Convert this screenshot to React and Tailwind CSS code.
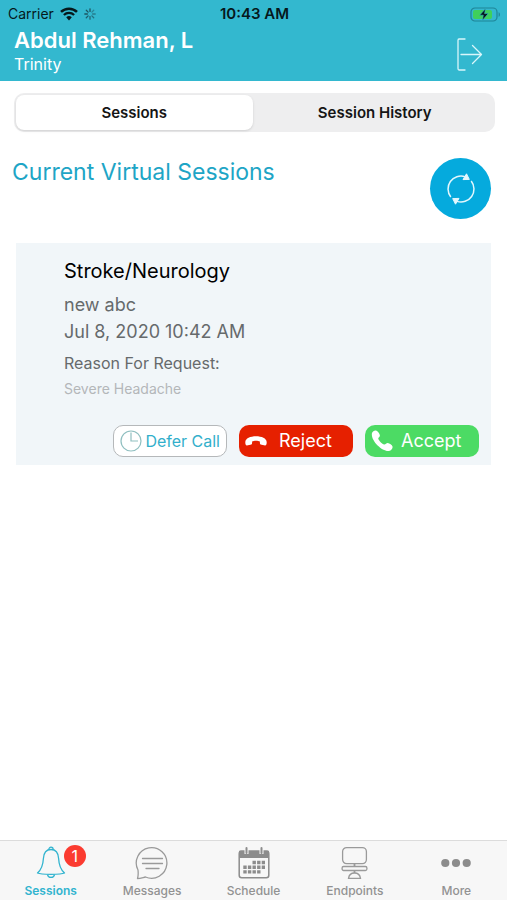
import { useState } from "react";

// status bar
function WifiIcon() {
  return (
    <svg width="18" height="14" viewBox="0 0 18 14" fill="none" stroke="#06181c">
      <path d="M1 4.900a11.600 11.600 0 0 1 16 0" strokeWidth="2.600" />
      <path d="M3.900 8a7.400 7.400 0 0 1 10.200 0" strokeWidth="2.300" />
      <path d="M9 13.400 6.200 10.300a4.200 4.200 0 0 1 5.600 0z" fill="#06181c" stroke="none" />
    </svg>
  );
}

function SpinnerIcon() {
  return (
    <svg width="12" height="12" viewBox="0 0 12 12" stroke="#1c5562" strokeWidth="1.300" strokeLinecap="round">
      <path d="M6 .8v2.600" />
      <path d="m9.700 2.300-1.800 1.800" opacity=".5" />
      <path d="M11.200 6H8.600" opacity=".6" />
      <path d="M9.700 9.700 7.900 7.900" opacity=".7" />
      <path d="M6 11.200V8.600" opacity=".8" />
      <path d="m2.300 9.700 1.800-1.800" opacity=".9" />
      <path d="M.8 6h2.600" />
      <path d="m2.300 2.300 1.800 1.800" />
    </svg>
  );
}

function BatteryIcon() {
  return (
    <svg width="31" height="15" viewBox="0 0 31 15">
      <rect x="1" y="1" width="26" height="13" rx="4" fill="none" stroke="#1f8497" strokeWidth="1.200" />
      <rect x="3" y="3" width="19" height="9" rx="2" fill="#3fd05c" />
      <path d="M28.600 5.200v4.600c1.800-.6 1.800-4 0-4.600z" fill="#1f8497" />
      <path d="M15.600 1.600 9.600 8.200h3.700l-1 5.200 6-6.800h-3.700z" fill="#06181c" stroke="#35b9cf" strokeWidth=".6" />
    </svg>
  );
}

function LogoutIcon() {
  return (
    <svg width="27" height="33" viewBox="0 0 27 33" fill="none" stroke="#d9f6fb" strokeWidth="1.300" strokeLinecap="round" strokeLinejoin="round">
      <path d="M9 1H3Q2 1 2 2.500V30.500Q2 32 3 32H9" />
      <path d="M5 16.500H25.500M16.500 7.500l9 9-9 9" />
    </svg>
  );
}

// session card
function RefreshIcon() {
  return (
    <svg width="32" height="32" viewBox="0 0 32 32" fill="none" stroke="#e3f7fd" strokeWidth="1.500">
      <path d="M5.800 24A13 13 0 0 1 20 3.600" />
      <path d="M26.200 8A13 13 0 0 1 12 28.400" />
      <path d="m21.500.8 2.800 5.600-6.300.2z" fill="#e3f7fd" strokeWidth="1" strokeLinejoin="round" />
      <path d="m10.500 31.200-2.800-5.600 6.300-.2z" fill="#e3f7fd" strokeWidth="1" strokeLinejoin="round" />
    </svg>
  );
}

function ClockIcon() {
  return (
    <svg width="22" height="22" viewBox="0 0 22 22" fill="none" stroke="#8fbfc0" strokeWidth="1.200">
      <circle cx="11" cy="11" r="10" />
      <path d="M11 2.500V11h7" />
    </svg>
  );
}

function HangUpIcon() {
  return (
    <svg width="22" height="10" viewBox="0 0 22 10" fill="#fff">
      <path d="M11 .3C5.500.3.300 2.400.300 6.200c0 1.900.3 3.200 1.700 3.200.9 0 3.500-.5 4.300-.9.9-.4.8-1.300.8-3.100C9 4.500 13 4.500 14.900 5.400c0 1.800-.1 2.700.8 3.100.8.4 3.400.9 4.300.9 1.400 0 1.700-1.300 1.700-3.200C21.700 2.400 16.500.3 11 .3z" />
    </svg>
  );
}

function PhoneIcon() {
  return (
    <svg width="22" height="22" viewBox="0 0 22 22" fill="#fff">
      <path d="M1 3C1.700 1.200 3.400.2 4.900.5c1.800.4 3.900 3.200 4 4.900.1 1.500-1.900 2.200-1.600 3.400.4 1.700 3.900 5.400 5.900 5.800 1.300.2 2.100-1.600 3.600-1.500 1.700.1 4.300 2 4.700 3.500.4 1.600-1.100 3.400-2.700 4.200C12.800 23.200-.9 11 1 3z" />
    </svg>
  );
}

// tab bar
function BellIcon() {
  return (
    <svg width="30" height="34" viewBox="0 0 30 34" fill="none" stroke="#32b4cf" strokeWidth="1.300" strokeLinejoin="round">
      <path d="M15 3.500c5 0 7.300 3.800 7.600 9 .4 7.300 2 11.200 5.900 14.500-3.500 1.700-23.500 1.700-27 0 3.900-3.300 5.500-7.200 5.900-14.500.3-5.200 2.600-9 7.600-9z" />
      <path d="M12.800 3.800c0-3.500 4.400-3.500 4.400 0M11.500 28.600c.8 3.800 6.200 3.800 7 0" />
    </svg>
  );
}

function MessageIcon() {
  return (
    <svg width="34" height="34" viewBox="0 0 34 34" fill="none" stroke="#9a9a9a" strokeWidth="1.300" strokeLinecap="round" strokeLinejoin="round">
      <path d="M2.500 32.500c1-3 .8-5.600.5-8.500A15.300 15.300 0 1 1 10.500 31c-2.500.5-5 1.500-8 1.500z" />
      <path d="M7.500 12.500h20M7.500 17.500h20M11 22.500h13" />
    </svg>
  );
}

function CalendarIcon() {
  return (
    <svg width="32" height="32" viewBox="0 0 32 32" fill="none" stroke="#8c8c8c">
      <rect x="1.200" y="4.200" width="29.600" height="26.600" rx="2.500" strokeWidth="1.500" />
      <path d="M1.500 4h29v6.500h-29z" fill="#8c8c8c" />
      <path d="M8.500 0v7M23.500 0v7" stroke="#f7f7f7" strokeWidth="4" />
      <path d="M8.500 1v5M23.500 1v5" strokeWidth="2" strokeLinecap="round" />
      <path d="M14.500 15.500H27" strokeWidth="3.400" strokeDasharray="3.400 1.200" />
      <path d="M5.300 20.200H27" strokeWidth="3.400" strokeDasharray="3.400 1.200" />
      <path d="M5.300 24.900H23" strokeWidth="3.400" strokeDasharray="3.400 1.200" />
    </svg>
  );
}

function EndpointIcon() {
  return (
    <svg width="27" height="34" viewBox="0 0 27 34" fill="none" stroke="#9a9a9a" strokeWidth="1.300">
      <rect x="1.600" y="1.600" width="23.800" height="16" rx="4" />
      <path d="M13.500 17.600v3M13.500 24.500V27" strokeWidth="1.800" />
      <rect x="1.100" y="20.500" width="24.800" height="4" rx="1.500" />
      <path d="M7.500 32.400c.5-3.500 2.500-5.400 6-5.400s5.500 1.900 6 5.400z" />
    </svg>
  );
}

function MoreIcon() {
  return (
    <svg width="30" height="10" viewBox="0 0 30 10" fill="#8c8c8c">
      <circle cx="4.300" cy="5" r="4.100" />
      <circle cx="15" cy="5" r="4.100" />
      <circle cx="25.700" cy="5" r="4.100" />
    </svg>
  );
}

const tabs = [
  { name: "Sessions", icon: <BellIcon />, badge: 1 },
  { name: "Messages", icon: <MessageIcon /> },
  { name: "Schedule", icon: <CalendarIcon /> },
  { name: "Endpoints", icon: <EndpointIcon /> },
  { name: "More", icon: <MoreIcon /> },
];

function Header() {
  return (
    <header className="bg-[#33b8cf] h-[81px] flex flex-col">
      <div className="grid grid-cols-3 items-center h-7 pl-2 pr-1.5 text-sm text-[#06181c]">
        <div className="flex items-center gap-1.5">
          <span>Carrier</span>
          <WifiIcon />
          <SpinnerIcon />
        </div>
        <span className="text-center text-[15px] font-semibold">10:43 AM</span>
        <div className="flex justify-end">
          <BatteryIcon />
        </div>
      </div>
      <div className="flex justify-between pl-3.5 pr-6 text-white">
        <div>
          <h1 className="text-[22px] leading-6 font-semibold">
            Abdul Rehman, L
          </h1>
          <p className="text-base leading-6">Trinity</p>
        </div>
        <button aria-label="Log out" className="self-center pt-1">
          <LogoutIcon />
        </button>
      </div>
    </header>
  );
}

function SessionCard(props) {
  return (
    <article className="bg-[#f1f6f9] mx-4 pt-4 pb-2 pr-3 pl-12">
      <h3 className="text-xl leading-6 text-black">{props.title}</h3>
      <div className="pt-2 text-lg leading-[27px] text-[#666a6c]">
        <p>{props.name}</p>
        <p>{props.date}</p>
      </div>
      <p className="pt-1 text-base leading-7 text-[#666a6c]">
        Reason For Request:
      </p>
      <p className="text-sm leading-6 text-[#b4b7b9]">{props.reason}</p>
      <div className="flex justify-end gap-3 pt-6">
        <button className="flex items-center justify-between w-[114px] h-8 px-1.5 rounded-[10px] border border-[#b5b8ba] bg-white text-base text-[#32afcb]">
          <ClockIcon />
          Defer Call
        </button>
        <button className="flex items-center w-[114px] h-8 pl-1.5 gap-3 rounded-[10px] bg-[#e62000] text-lg text-white">
          <HangUpIcon />
          Reject
        </button>
        <button className="flex items-center w-[114px] h-8 pl-1.5 gap-2 rounded-[10px] bg-[#4cdb64] text-lg text-white">
          <PhoneIcon />
          Accept
        </button>
      </div>
    </article>
  );
}

function App() {
  const [view, setView] = useState("Sessions");

  return (
    <div className="min-h-screen flex flex-col bg-white font-['Inter',sans-serif]">
      <Header />
      <main className="grow">
        <div className="flex gap-1 ml-3.5 mr-3 mt-3 p-0.5 h-[39px] rounded-[10px] bg-[#eeeeef]">
          {["Sessions", "Session History"].map((item) => (
            <button
              key={item}
              onClick={() => setView(item)}
              className={
                view === item
                  ? "flex-1 pt-0.5 rounded-lg bg-white shadow text-[15px] font-semibold text-[#151515]"
                  : "flex-1 pt-0.5 text-[15px] font-semibold text-[#151515]"
              }
            >
              {item}
            </button>
          ))}
        </div>
        <div className="flex justify-between pl-3 pr-4 pt-6 pb-6">
          <h2 className="text-[23px] leading-8 text-[#1ea5c6]">
            Current Virtual Sessions
          </h2>
          <button
            aria-label="Refresh"
            className="flex items-center justify-center mt-0.5 size-[61px] rounded-full bg-[#05aadd]"
          >
            <RefreshIcon />
          </button>
        </div>
        <SessionCard
          title="Stroke/Neurology"
          name="new abc"
          date="Jul 8, 2020 10:42 AM"
          reason="Severe Headache"
        />
      </main>
      <nav className="flex h-[60px] border-t border-[#dcdcdc] bg-[#f7f7f7] text-xs font-medium">
        {tabs.map((tab, i) => (
          <a
            key={tab.name}
            href="#"
            className={
              i === 0
                ? "flex-1 flex flex-col items-center font-semibold text-[#32b4cf]"
                : "flex-1 flex flex-col items-center text-[#929292]"
            }
          >
            <span className="relative flex items-center h-11">
              {tab.icon}
              {tab.badge && (
                <span className="absolute top-1 left-7 flex items-center justify-center size-[22px] rounded-full bg-[#fb3b30] text-base font-normal text-white">
                  {tab.badge}
                </span>
              )}
            </span>
            <span className="leading-3">{tab.name}</span>
          </a>
        ))}
      </nav>
    </div>
  );
}

export default App;
